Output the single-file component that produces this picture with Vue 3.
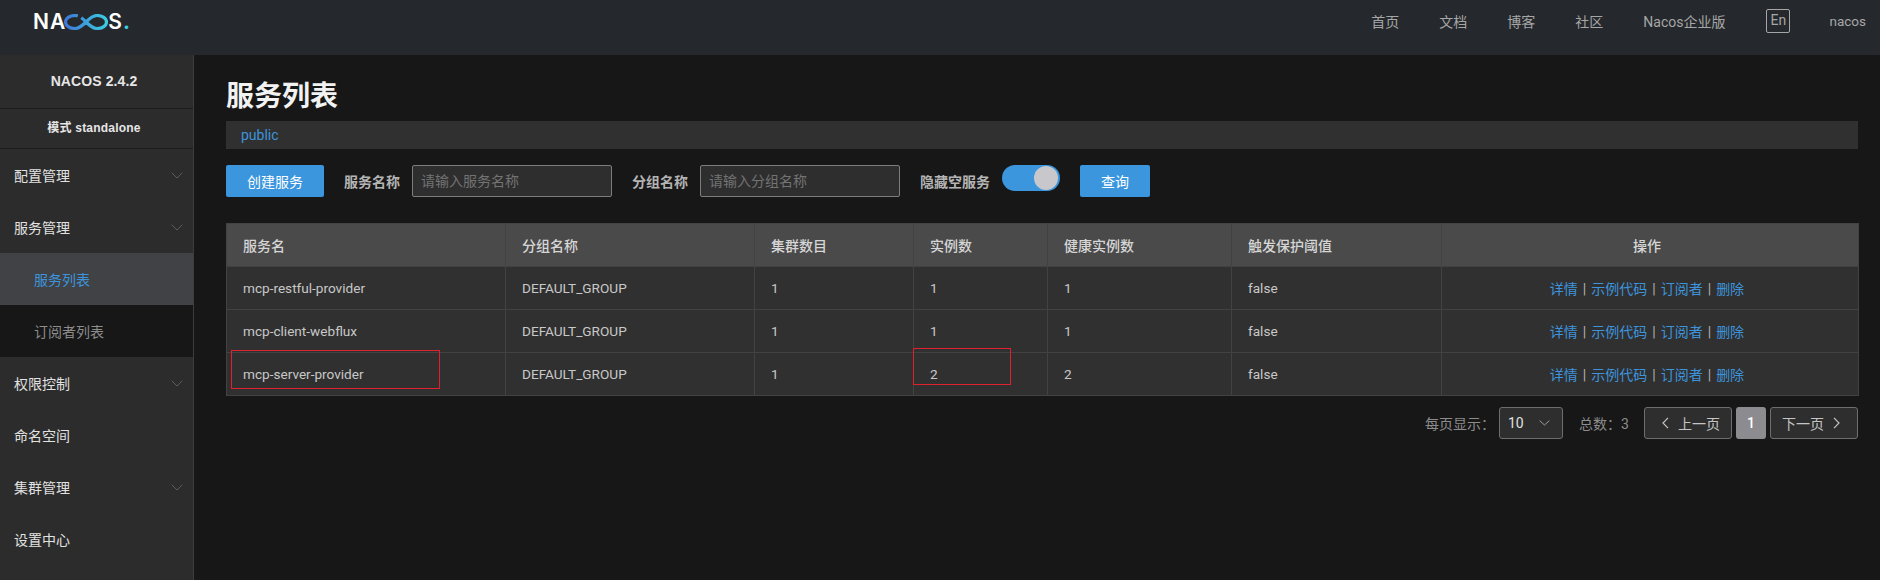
<script setup>
const nav = ['首页', '文档', '博客', '社区', 'Nacos企业版']
const menu = [
  { label: '配置管理', arrow: true },
  { label: '服务管理', arrow: true },
  { label: '服务列表', kind: 'active' },
  { label: '订阅者列表', kind: 'sub' },
  { label: '权限控制', arrow: true },
  { label: '命名空间' },
  { label: '集群管理', arrow: true },
  { label: '设置中心' }
]
const columns = [
  { t: '服务名', w: 279 }, { t: '分组名称', w: 249 }, { t: '集群数目', w: 159 },
  { t: '实例数', w: 134 }, { t: '健康实例数', w: 184 }, { t: '触发保护阈值', w: 210 }, { t: '操作', w: 417 }
]
const rows = [
  ['mcp-restful-provider', 'DEFAULT_GROUP', '1', '1', '1', 'false'],
  ['mcp-client-webflux', 'DEFAULT_GROUP', '1', '1', '1', 'false'],
  ['mcp-server-provider', 'DEFAULT_GROUP', '1', '2', '2', 'false']
]
const ops = ['详情', '示例代码', '订阅者', '删除']
</script>

<template>
  <div class="page">
    <header class="top">
      <div class="logo">
        <span class="logo-t">NA</span>
        <svg class="inf" width="44" height="16" viewBox="0 0 44 16" fill="none">
          <defs>
            <linearGradient id="infg" gradientUnits="userSpaceOnUse" x1="0" x2="44" y1="0" y2="0">
              <stop offset="0" stop-color="#3f74d8" />
              <stop offset="1" stop-color="#3ad0e0" />
            </linearGradient>
          </defs>
          <path d="M13.800 2C12.900 1.700 12 1.500 11 1.500C5.500 1.500 1.500 4.400 1.500 8C1.500 11.600 5.500 14.500 11 14.500C15 14.500 18 12 22 8C26 4 29 1.500 33 1.500C38.500 1.500 42.500 4.400 42.500 8C42.500 11.600 38.500 14.500 33 14.500C29 14.500 26 12 22 8C20.300 6.300 18.800 4.900 17.200 3.800" stroke="url(#infg)" stroke-width="3.200" />
        </svg>
        <span class="logo-t s">S</span><span class="logo-dot">.</span>
      </div>
      <nav class="nav">
        <span v-for="n in nav" :key="n" class="nav-item">{{ n }}</span>
        <span class="lang">En</span>
        <span class="user">nacos</span>
      </nav>
    </header>
    <div class="body">
      <aside class="side">
        <div class="brand">NACOS 2.4.2</div>
        <div class="mode">模式 standalone</div>
        <div v-for="m in menu" :key="m.label" class="mi" :class="m.kind">
          <span>{{ m.label }}</span>
          <svg v-if="m.arrow" class="mi-arrow" width="12" height="7" viewBox="0 0 12 7" fill="none">
            <path d="M.7.7 6 6 11.300.7" stroke="#5c5c5c" stroke-width="1" />
          </svg>
        </div>
      </aside>
      <main class="main">
        <h1 class="title">服务列表</h1>
        <div class="crumb"><span>public</span></div>
        <div class="tools">
          <button class="btn create">创建服务</button>
          <label class="lab l1">服务名称</label>
          <div class="inp">请输入服务名称</div>
          <label class="lab l2">分组名称</label>
          <div class="inp">请输入分组名称</div>
          <label class="lab l3">隐藏空服务</label>
          <div class="switch"><i class="knob"></i></div>
          <button class="btn query">查询</button>
        </div>
        <div class="table-wrap">
          <table class="table">
            <colgroup>
              <col v-for="c in columns" :key="c.t" :style="{ width: c.w + 'px' }" />
            </colgroup>
            <thead>
              <tr><th v-for="(c, i) in columns" :key="c.t" :class="{ center: i === 6 }">{{ c.t }}</th></tr>
            </thead>
            <tbody>
              <tr v-for="r in rows" :key="r[0]">
                <td v-for="(v, i) in r" :key="i">{{ v }}</td>
                <td class="center">
                  <template v-for="(o, i) in ops" :key="o">
                    <a class="link">{{ o }}</a><span v-if="i < 3" class="sep">|</span>
                  </template>
                </td>
              </tr>
            </tbody>
          </table>
          <div class="mark m1"></div>
          <div class="mark m2"></div>
        </div>
        <div class="pager">
          <span class="pl">每页显示：</span>
          <div class="sel">
            <span>10</span>
            <svg width="11" height="6" viewBox="0 0 11 6" fill="none"><path d="M.6.6 5.500 5 10.400.6" stroke="#9a9a9a" /></svg>
          </div>
          <span class="tot">总数：3</span>
          <div class="pb prev">
            <svg width="7" height="12" viewBox="0 0 7 12" fill="none"><path d="M6 .8 1 6l5 5.200" stroke="#c4c4c4" stroke-width="1.200" /></svg>
            <span>上一页</span>
          </div>
          <div class="cur">1</div>
          <div class="pb next">
            <span>下一页</span>
            <svg width="7" height="12" viewBox="0 0 7 12" fill="none"><path d="M1 .8 6 6l-5 5.200" stroke="#c4c4c4" stroke-width="1.200" /></svg>
          </div>
        </div>
      </main>
    </div>
  </div>
</template>

<style>
html, body { margin: 0; background: #171717; }
</style>

<style scoped>
.page {
  width: 1880px;
  height: 580px;
  overflow: hidden;
  background: #171717;
  font-family: Roboto, "Noto Sans CJK SC", sans-serif;
  font-size: 14px;
  color: #c4c4c4;
}
.top {
  height: 55px;
  background: #25292d;
  display: flex;
  justify-content: space-between;
  padding: 0 14px 0 33px;
  box-sizing: border-box;
}
.logo { display: flex; align-items: center; height: 43px; color: #fff; }
.logo-t {
  font-family: Inter, sans-serif;
  font-size: 21px;
  font-weight: 600;
  line-height: 21px;
  letter-spacing: 1px;
}
.logo-dot {
  font-family: Inter, sans-serif;
  font-size: 21px;
  font-weight: 700;
  line-height: 21px;
  color: #3ad0e0;
}
.inf { margin-left: -2px; }
.s { margin-left: 0; }
.nav { display: flex; align-items: center; height: 42px; font-size: 14px; color: #a6a6a6; }
.nav-item { margin-right: 40px; }
.lang {
  width: 24px;
  height: 24px;
  box-sizing: border-box;
  border: 1px solid #a6a6a6;
  border-radius: 2px;
  text-align: center;
  line-height: 20px;
  font-size: 14px;
  margin-left: 1px;
  margin-right: 39px;
}
.user { font-size: 13.500px; }
.body { display: flex; height: 525px; }
.side {
  width: 194px;
  flex: none;
  box-sizing: border-box;
  background: #2c2c2c;
  border-right: 1px solid #3d3d3d;
}
.brand, .mode {
  text-align: center;
  font-family: "Liberation Sans", "Noto Sans CJK SC", sans-serif;
  font-weight: 700;
  color: #e6e6e6;
  border-bottom: 1px solid #1d1d1d;
  box-sizing: border-box;
  padding-right: 5px;
}
.brand { height: 54px; line-height: 52px; font-size: 14px; letter-spacing: .1px; }
.mode { height: 40px; line-height: 38px; font-size: 12px; letter-spacing: .2px; }
.mi {
  height: 52px;
  display: flex;
  align-items: center;
  justify-content: space-between;
  padding: 0 10px 0 14px;
  color: #e2e2e2;
}
.mi.active { background: #404245; color: #3d94dc; padding-left: 34px; }
.mi.sub { background: #171717; color: #8c8c8c; padding-left: 34px; }
.main { flex: 1; min-width: 0; padding: 24px 22px 0 32px; }
.title {
  margin: 0 0 6px;
  font-size: 28px;
  line-height: 36px;
  font-weight: 700;
  color: #f2f2f2;
}
.crumb {
  height: 28px;
  background: #303030;
  line-height: 28px;
  padding-left: 15px;
  box-sizing: border-box;
  color: #3d94dc;
}
.tools { display: flex; align-items: center; height: 32px; margin-top: 16px; }
.btn {
  height: 32px;
  border: 0;
  border-radius: 2px;
  background: #3b96de;
  color: #fff;
  font: inherit;
  padding: 0;
}
.create { width: 98px; }
.query { width: 70px; margin-left: 20px; }
.lab { font-weight: 700; color: #b4b4b4; margin-right: 12px; }
.l1 { margin-left: 20px; }
.l2 { margin-left: 20px; }
.l3 { margin-left: 20px; }
.inp {
  width: 200px;
  height: 32px;
  box-sizing: border-box;
  border: 1px solid #7d7d7d;
  border-radius: 2px;
  background: #2e2e2e;
  color: #737373;
  line-height: 30px;
  padding-left: 8px;
}
.switch {
  position: relative;
  width: 58px;
  height: 26px;
  border-radius: 13px;
  background: #3b96de;
  align-self: flex-start;
}
.knob {
  position: absolute;
  right: 2px;
  top: 1px;
  width: 24px;
  height: 24px;
  border-radius: 50%;
  background: #c8c8cc;
}
.table-wrap { position: relative; margin-top: 26px; width: 1632px; }
.table {
  width: 1632px;
  table-layout: fixed;
  border-collapse: collapse;
  background: #303030;
  font-size: 13.600px;
}
.table th, .table td {
  border: 1px solid #424242;
  padding: 0 0 1px 16px;
  text-align: left;
  box-sizing: border-box;
}
.table th {
  height: 43px;
  background: #4a4a4a;
  font-weight: 500;
  font-size: 14px;
  color: #d6d6d6;
}
.table td { height: 43px; color: #c8c8c8; }
.table .center { text-align: center; padding-left: 0; padding-right: 6px; font-size: 14px; }
.link { color: #3d94dc; }
.sep { color: #b0b0b0; margin: 0 5px; }
.mark { position: absolute; border: 1px solid #e0202c; box-sizing: border-box; }
.m1 { left: 5px; top: 127px; width: 209px; height: 39px; }
.m2 { left: 687px; top: 125px; width: 98px; height: 37px; }
.pager {
  display: flex;
  align-items: center;
  justify-content: flex-end;
  height: 32px;
  margin-top: 11px;
  width: 1632px;
  font-size: 14px;
  color: #8c8c8c;
}
.sel, .pb {
  height: 32px;
  box-sizing: border-box;
  border: 1px solid #6e6e6e;
  border-radius: 3px;
  background: #2e2e2e;
  display: flex;
  align-items: center;
  justify-content: space-between;
  color: #c4c4c4;
  font-size: 14px;
}
.pl { margin-right: 4px; }
.sel { width: 64px; padding: 0 12px 0 8px; color: #e0e0e0; }
.tot { margin: 0 16px 0 16px; width: 49px; white-space: nowrap; }
.pb { width: 88px; }
.prev { padding: 0 11px 0 17px; }
.next { padding: 0 17px 0 11px; }
.cur {
  width: 30px;
  height: 32px;
  margin: 0 4px;
  border-radius: 3px;
  background: #8c8c90;
  color: #fff;
  font-weight: 500;
  font-size: 14px;
  text-align: center;
  line-height: 32px;
}
</style>
